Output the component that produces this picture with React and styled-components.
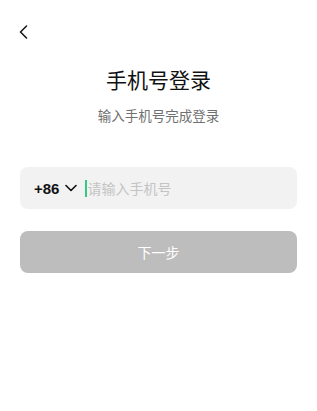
import React from "react";
import styled, { createGlobalStyle } from "styled-components";

const Global = createGlobalStyle`
  html, body { margin: 0; padding: 0; background: #fff; }
  body { font-family: "Noto Sans CJK SC", "Noto Sans", sans-serif; }
  * { box-sizing: border-box; }
`;

const Page = styled.div`
  width: 317px;
  height: 411px;
  display: flex;
  flex-direction: column;
  padding: 0 20px;
`;

const TopBar = styled.div`
  height: 64px;
  display: flex;
  align-items: flex-start;
  padding-top: 25px;
`;

const BackButton = styled.button`
  border: 0;
  background: none;
  padding: 0;
  margin-left: -1px;
  width: 12px;
  height: 14px;
  display: flex;
  cursor: pointer;
`;

const Title = styled.h1`
  margin: 0;
  text-align: center;
  font-size: 21px;
  font-weight: 400;
  line-height: 30px;
  color: #111;
`;

const Subtitle = styled.p`
  margin: 11px 0 0;
  text-align: center;
  font-size: 13.5px;
  line-height: 20px;
  color: #707070;
`;

const Field = styled.div`
  margin-top: 42px;
  height: 42px;
  border-radius: 8px;
  background: #f2f2f2;
  display: flex;
  align-items: center;
  padding: 0 14px;
`;

const Code = styled.div`
  display: flex;
  align-items: center;
  gap: 6px;
  font-family: "Liberation Sans", Arial, sans-serif;
  font-weight: 700;
  font-size: 15px;
  color: #111;
`;

const Caret = styled.span`
  width: 2px;
  height: 17px;
  background: #2fcb86;
  margin-left: 8px;
`;

const Input = styled.input`
  flex: 1;
  min-width: 0;
  border: 0;
  background: transparent;
  outline: none;
  padding: 0;
  font-family: "Noto Sans CJK SC", sans-serif;
  font-size: 14px;
  color: #111;
  &::placeholder { color: #c4c4c4; }
`;

const Submit = styled.button`
  margin-top: 22px;
  height: 42px;
  border: 0;
  border-radius: 8px;
  background: #bdbdbd;
  color: #fff;
  font-family: "Noto Sans CJK SC", sans-serif;
  font-size: 14px;
  font-weight: 400;
  width: 100%;
`;

export default function App() {
  return (
    <>
      <Global />
      <Page>
        <TopBar>
          <BackButton aria-label="返回">
            <svg width="10" height="14" viewBox="0 0 10 14" fill="none">
              <path d="M7.5 1 L1.5 7 L7.5 13" stroke="#111" strokeWidth="1.5" strokeLinecap="round" strokeLinejoin="round" />
            </svg>
          </BackButton>
        </TopBar>
        <Title>手机号登录</Title>
        <Subtitle>输入手机号完成登录</Subtitle>
        <Field>
          <Code>
            +86
            <svg width="12" height="8" viewBox="0 0 12 8" fill="none">
              <path d="M1 1.5 L6 6.5 L11 1.5" stroke="#111" strokeWidth="1.6" strokeLinecap="round" strokeLinejoin="round" />
            </svg>
          </Code>
          <Caret />
          <Input placeholder="请输入手机号" />
        </Field>
        <Submit>下一步</Submit>
      </Page>
    </>
  );
}
